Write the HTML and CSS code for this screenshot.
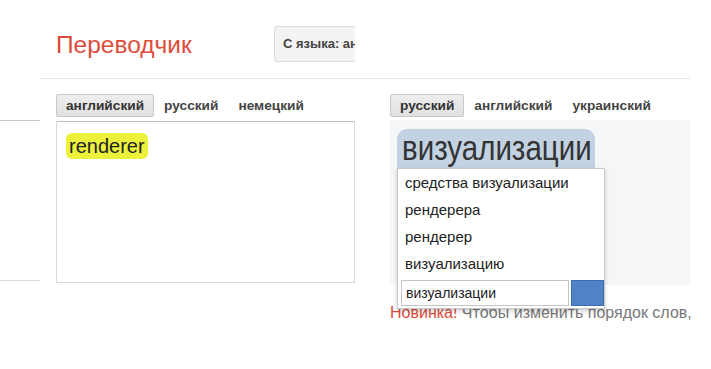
FILE: index.html
```html
<!DOCTYPE html>
<html lang="ru">
<head>
<meta charset="utf-8">
<title>Переводчик</title>
<link rel="stylesheet" href="styles.css">
</head>
<body>
<header class="header">
  <div class="head-left">
    <div class="title">Переводчик</div>
    <div class="lang-btn">С языка: английский</div>
  </div>
</header>
<main class="main">
  <div class="stub"></div>
  <section class="src">
    <div class="tabs">
      <span class="tab tab-on">английский</span>
      <span class="tab">русский</span>
      <span class="tab">немецкий</span>
    </div>
    <div class="src-box">
      <span class="src-word">renderer</span>
    </div>
  </section>
  <section class="dst">
    <div class="tabs">
      <span class="tab tab-on">русский</span>
      <span class="tab">английский</span>
      <span class="tab">украинский</span>
    </div>
    <div class="dst-box">
      <div class="word-wrap">
        <span class="dst-word"><span class="dst-text">визуализации</span></span>
        <div class="alt-menu">
          <div class="alt">средства визуализации</div>
          <div class="alt">рендерера</div>
          <div class="alt">рендерер</div>
          <div class="alt">визуализацию</div>
          <div class="alt-edit">
            <div class="alt-input">визуализации</div>
            <div class="alt-go"></div>
          </div>
        </div>
      </div>
    </div>
    <p class="note"><span class="note-new">Новинка!</span> Чтобы изменить порядок слов,</p>
  </section>
</main>
</body>
</html>
```
FILE: styles.css
```css
html, body {
  margin: 0;
  padding: 0;
  background: #fff;
  font-family: "Liberation Sans", Arial, sans-serif;
  color: #222;
  overflow: hidden;
}

.header {
  height: 78px;
  margin-left: 40px;
  width: 650px;
  border-bottom: 1px solid #e5e5e5;
}

.head-left {
  width: 315px;
  height: 78px;
  overflow: hidden;
  display: flex;
  align-items: flex-start;
  padding-left: 16px;
  box-sizing: border-box;
}

.title {
  width: 218px;
  flex: none;
  margin-top: 31px;
  font-size: 24.5px;
  line-height: 28px;
  color: #dd4b39;
}

.lang-btn {
  flex: none;
  margin-top: 26px;
  height: 34px;
  padding: 0 8px;
  background: #f3f3f3;
  border: 1px solid #dcdcdc;
  border-radius: 2px;
  font-size: 13px;
  font-weight: bold;
  line-height: 34px;
  color: #444;
  white-space: nowrap;
}

.main {
  display: flex;
  align-items: flex-start;
  padding-top: 15px;
}

.stub {
  width: 40px;
  height: 159px;
  margin-top: 26px;
  border-top: 1px solid #c6c6c6;
  border-bottom: 1px solid #dedede;
  flex: none;
}

.src {
  width: 299px;
  margin-left: 16px;
  flex: none;
}

.tabs {
  display: flex;
  height: 23px;
}

.tab {
  padding: 0 9px;
  border: 1px solid transparent;
  border-radius: 2px;
  font-size: 13.7px;
  font-weight: bold;
  line-height: 21px;
  color: #444;
  white-space: nowrap;
}

.tab-on {
  background: linear-gradient(#eeeeee, #e0e0e0);
  border-color: #c8c8c8;
  color: #333;
}

.src-box {
  margin-top: 4px;
  height: 149px;
  padding: 11px 9px 0;
  border: 1px solid #d9d9d9;
  border-top-color: #c0c0c0;
}

.src-word {
  display: inline-block;
  padding: 0 3px;
  height: 26px;
  line-height: 26px;
  font-size: 20px;
  background: #ecf23c;
  border-radius: 6px;
  color: #222;
}

.dst {
  width: 300px;
  margin-left: 35px;
  flex: none;
}

.dst-box {
  margin-top: 3px;
  height: 156px;
  padding: 9px 0 0 7px;
  background: #f5f6f8;
}

.word-wrap {
  position: relative;
  display: inline-block;
}

.dst-word {
  display: inline-block;
  height: 39px;
  padding: 0 3px 0 5px;
  line-height: 39px;
  font-size: 29.5px;
  color: #333;
  background: #c3d2e3;
  border-radius: 10px 10px 0 0;
}

.dst-text {
  display: inline-block;
  transform: scaleY(1.2);
  transform-origin: 50% 60%;
}

.alt-menu {
  position: absolute;
  top: 39px;
  left: 0;
  width: 206px;
  height: 139px;
  background: #fff;
  border: 1px solid #c8c8c8;
  box-shadow: 0 2px 4px rgba(0, 0, 0, 0.2);
  z-index: 2;
}

.alt {
  height: 27px;
  padding-left: 7px;
  font-size: 15px;
  line-height: 27px;
  color: #222;
  white-space: nowrap;
}

.alt-edit {
  display: flex;
  gap: 2px;
  margin: 3px 0 0 3px;
}

.alt-input {
  width: 164px;
  height: 24px;
  padding-left: 4px;
  border: 1px solid #c4c4c4;
  font-size: 14px;
  line-height: 24px;
  color: #222;
}

.alt-go {
  width: 31px;
  height: 24px;
  background: #5082c6;
  border: 1px solid #3d6db4;
}

.note {
  margin: 18px 0 0;
  font-size: 16px;
  line-height: 20px;
  color: #777;
  white-space: nowrap;
}

.note-new {
  color: #dd4b39;
}
```
